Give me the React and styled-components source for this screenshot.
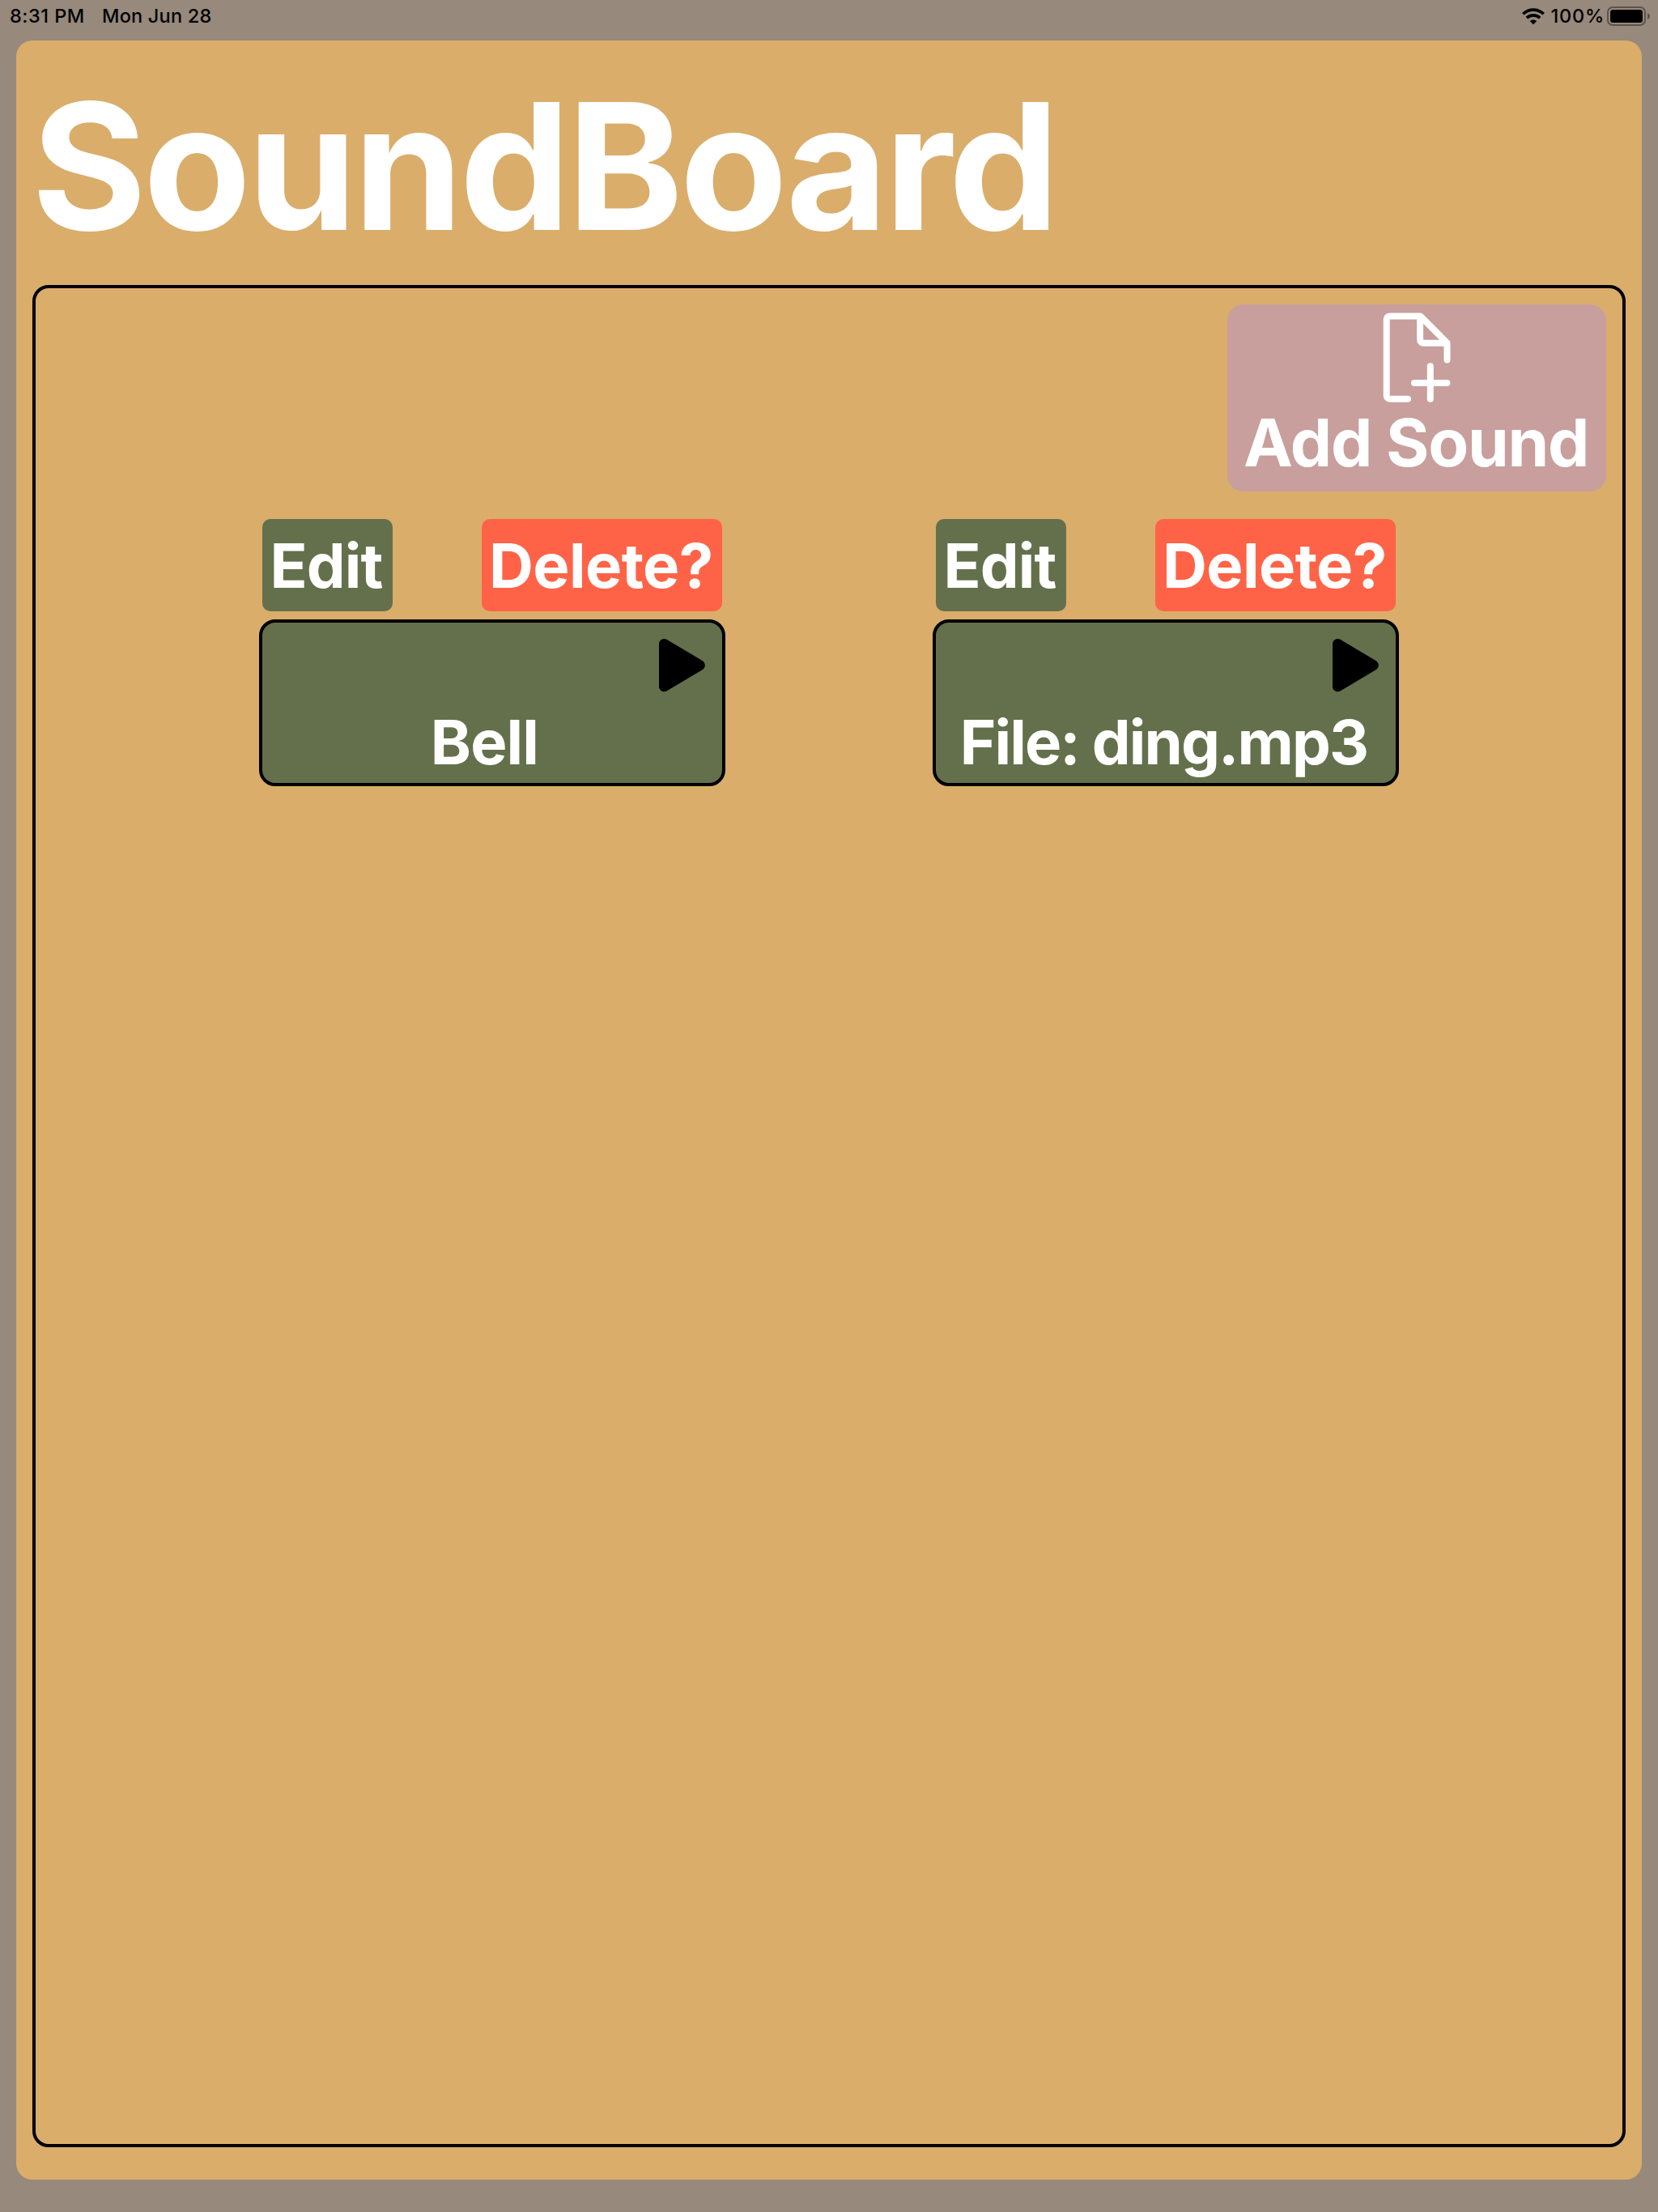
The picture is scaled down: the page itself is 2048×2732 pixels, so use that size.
import React from "react";
import styled, { createGlobalStyle } from "styled-components";

const GlobalStyle = createGlobalStyle`
  * { box-sizing: border-box; }
  body {
    margin: 0;
    background: #97897b;
    font-family: Inter, "Liberation Sans", sans-serif;
  }
  button { font-family: inherit; border: 0; margin: 0; padding: 0; }
`;

const Screen = styled.div`
  display: flex;
  flex-direction: column;
  width: 2048px;
  height: 2732px;
  padding: 0 20px 40px;
  background: #97897b;
`;

const StatusBar = styled.div`
  display: flex;
  justify-content: space-between;
  height: 50px;
  margin: 0 -20px;
  padding: 0 9px 0 12px;
  color: #000;
  font-size: 23.5px;
  font-weight: 500;
  line-height: 40px;
  white-space: nowrap;
`;

const StatusGroup = styled.div`
  display: flex;
  height: 40px;
`;

const Clock = styled.span`
  width: 114px;
  letter-spacing: 0.5px;
`;

const DateText = styled.span`
  letter-spacing: 0.2px;
`;

const Percent = styled.span`
  width: 69.5px;
  letter-spacing: 0.8px;
`;

const WifiSvg = styled.svg`
  display: block;
  width: 28px;
  height: 21px;
  margin: 9.5px 8px 0 0;
`;

const BatterySvg = styled.svg`
  display: block;
  width: 54px;
  height: 24px;
  margin-top: 8px;
`;

const Board = styled.main`
  display: flex;
  flex-direction: column;
  flex: 1;
  padding: 20px 20px 40px;
  border-radius: 20px;
  background: #daad6b;
`;

const Title = styled.h1`
  margin: 0 0 12px -1px;
  color: #fff;
  font-size: 217px;
  font-weight: 700;
  line-height: 270px;
  letter-spacing: -4.15px;
  white-space: nowrap;
`;

const Panel = styled.section`
  display: flex;
  flex-direction: column;
  flex: 1;
  padding: 20px;
  border: 4px solid #000;
  border-radius: 20px;
`;

const AddButton = styled.button`
  display: flex;
  flex-direction: column;
  align-items: center;
  align-self: flex-end;
  width: 468px;
  height: 231px;
  padding: 10px 0 10px;
  border-radius: 20px;
  background: #c89f9c;
`;

const AddIcon = styled.svg`
  display: block;
  width: 84px;
  height: 111px;
`;

const AddLabel = styled.span`
  align-self: flex-start;
  margin-left: 20px;
  color: #fff;
  font-size: 81.6px;
  font-weight: 700;
  line-height: 100px;
  letter-spacing: -1.29px;
  white-space: nowrap;
`;

const SoundGrid = styled.div`
  display: flex;
  justify-content: center;
  gap: 256px;
  margin-top: 34px;
`;

const SoundItem = styled.article`
  display: flex;
  flex-direction: column;
  gap: 10px;
  width: 576px;
`;

const Actions = styled.div`
  display: flex;
  justify-content: space-between;
  padding: 0 4px;
`;

const ActionButton = styled.button`
  width: ${({ $danger }) => ($danger ? "297px" : "161px")};
  height: 114px;
  padding-left: ${({ $danger }) => ($danger ? "9px" : "9.5px")};
  border-radius: 10px;
  background: ${({ $danger }) => ($danger ? "#ff6347" : "#64704b")};
  color: #fff;
  font-size: 76px;
  font-weight: 700;
  line-height: 114px;
  letter-spacing: ${({ $danger }) => ($danger ? "-0.6px" : "-0.9px")};
  text-align: left;
  white-space: nowrap;
`;

const SoundCard = styled.div`
  display: flex;
  flex-direction: column;
  justify-content: space-between;
  height: 206px;
  padding: 20px 0 4px;
  border: 4px solid #000;
  border-radius: 20px;
  background: #64704b;
`;

const PlaySvg = styled.svg`
  display: block;
  align-self: flex-end;
  width: 57px;
  height: 66px;
  margin-right: 21px;
`;

const SoundName = styled.div`
  padding-right: ${({ $tight }) => ($tight ? "5px" : "2px")};
  color: #fff;
  font-size: 76px;
  font-weight: 700;
  line-height: 93px;
  letter-spacing: ${({ $tight }) => ($tight ? "-1.9px" : "-0.88px")};
  text-align: center;
  white-space: pre;
`;

function Wifi() {
  return (
    <WifiSvg viewBox="0 0 28 21" fill="none" stroke="#000" strokeWidth="3.6">
      <path d="M1.3 7.3C8.3 0.4 19.7 0.4 26.7 7.3" />
      <path d="M5.9 12.1C10.4 7.8 17.6 7.8 22.1 12.1" />
      <path d="M14 20.3L9.7 16C12.1 13.9 15.9 13.9 18.3 16Z" fill="#000" stroke="none" />
    </WifiSvg>
  );
}

function Battery() {
  return (
    <BatterySvg viewBox="0 0 54 24">
      <rect x="1" y="1" width="46" height="22" rx="6" fill="none" stroke="#5c544c" strokeWidth="2" />
      <rect x="4" y="4" width="40" height="16" rx="3.5" fill="#000" />
      <path d="M50 8C54 9.4 54 14.6 50 16Z" fill="#5c544c" />
    </BatterySvg>
  );
}

function DocumentAdd() {
  return (
    <AddIcon
      viewBox="0 0 84 111"
      fill="none"
      stroke="#fff"
      strokeWidth="8"
      strokeLinecap="round"
      strokeLinejoin="round"
    >
      <path d="M31 106.7H8.7a4 4 0 0 1-4-4V8.4a4 4 0 0 1 4-4H46.4L79.5 37.5V58.5" />
      <path d="M46.1 5V33.8a4 4 0 0 0 4 4H79" />
      <path d="M39 87H79.4M58.8 66.3V106.7" />
    </AddIcon>
  );
}

function Play() {
  return (
    <PlaySvg viewBox="0 0 57 66">
      <path d="M0 6.5C0 2.5 3 0 6.5 0C8.3 0 9.8 0.8 11.1 1.7L52.3 26.3C55.2 28 56.8 30 56.8 32.7S55.2 37.3 52.3 39L11.1 63.6C9.8 64.6 8.3 65.3 6.5 65.3C3 65.3 0 62.8 0 58.8Z" />
    </PlaySvg>
  );
}

function Sound({ name, tight }) {
  return (
    <SoundItem>
      <Actions>
        <ActionButton>Edit</ActionButton>
        <ActionButton $danger>Delete?</ActionButton>
      </Actions>
      <SoundCard>
        <Play />
        <SoundName $tight={tight}>{name}</SoundName>
      </SoundCard>
    </SoundItem>
  );
}

export default function App() {
  return (
    <Screen>
      <GlobalStyle />
      <StatusBar>
        <StatusGroup>
          <Clock>8:31 PM</Clock>
          <DateText>Mon Jun 28</DateText>
        </StatusGroup>
        <StatusGroup>
          <Wifi />
          <Percent>100%</Percent>
          <Battery />
        </StatusGroup>
      </StatusBar>
      <Board>
        <Title>SoundBoard</Title>
        <Panel>
          <AddButton>
            <DocumentAdd />
            <AddLabel>Add Sound</AddLabel>
          </AddButton>
          <SoundGrid>
            <Sound name="Bell " />
            <Sound name="File: ding.mp3" tight />
          </SoundGrid>
        </Panel>
      </Board>
    </Screen>
  );
}
